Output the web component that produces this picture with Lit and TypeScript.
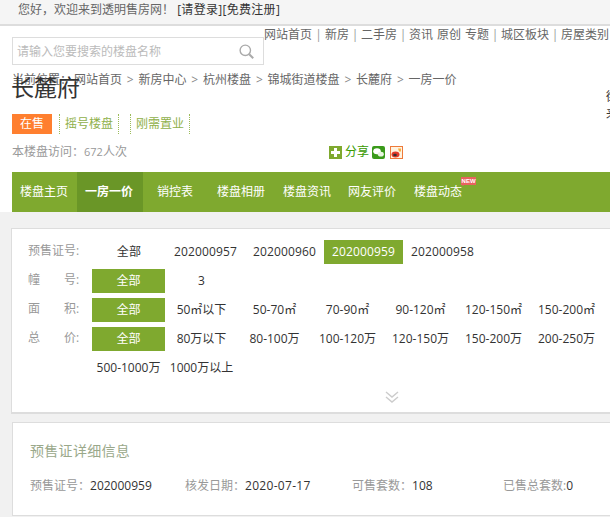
import { LitElement, html, css } from "lit";
import { customElement } from "lit/decorators.js";

const tabs = ["楼盘主页", "一房一价", "销控表", "楼盘相册", "楼盘资讯", "网友评价", "楼盘动态"];
const crumbs = ["网站首页", "新房中心", "杭州楼盘", "锦城街道楼盘", "长麓府", "一房一价"];
const rows = [
  { label: "预售证号:", items: ["全部", "202000957", "202000960", "202000959", "202000958"], on: "202000959" },
  { label: "幢　　号:", items: ["全部", "3"], on: "全部" },
  { label: "面　　积:", items: ["全部", "50㎡以下", "50-70㎡", "70-90㎡", "90-120㎡", "120-150㎡", "150-200㎡", "200-250㎡"], on: "全部" },
  { label: "总　　价:", items: ["全部", "80万以下", "80-100万", "100-120万", "120-150万", "150-200万", "200-250万", "250-300万", "300-500万", "500-1000万", "1000万以上"], on: "全部" },
];

@customElement("app-root")
export class AppRoot extends LitElement {
  static styles = css`
    :host {
      display: block;
      width: 610px;
      height: 517px;
      overflow: hidden;
      background: #f1f1f1;
      font: 12px/24px "Open Sans", "Noto Sans CJK SC", sans-serif;
      color: #333;
    }
    .top {
      height: 24px;
      background: #f5f5f5;
      border-bottom: 2px solid #ddd;
      padding-left: 18px;
      color: #666;
      line-height: 19px;
      white-space: nowrap;
    }
    .top b { font-weight: 400; color: #333; letter-spacing: 0.3px; }
    .head {
      background: #fff;
      height: 186px;
      padding-left: 12px;
      position: relative;
      overflow: hidden;
    }
    .headrow { display: flex; height: 39px; }
    .search {
      margin-top: 11px;
      height: 26px;
      border: 1px solid #ddd;
      display: flex;
      align-items: center;
      justify-content: space-between;
      padding: 0 9px 0 4px;
      width: 237px;
      color: #bbb;
      flex: none;
    }
    .search span { padding-top: 1px; }
    .links {
      display: flex;
      height: 16px;
      line-height: 16px;
      margin-top: 1px;
      color: #666;
      white-space: nowrap;
      flex: none;
    }
    .links i { font-style: normal; color: #999; width: 12px; text-align: center; }
    .links i:first-of-type { width: 13px; }
    .links span + span { margin-left: 4px; }
    .crumb {
      display: flex;
      color: #666;
      line-height: 16px;
      margin-top: 7px;
      white-space: nowrap;
      height: 16px;
    }
    .crumb i { font-style: normal; width: 16.5px; text-align: center; color: #888; }
    .crumb b { font-weight: 400; margin-right: 2px; }
    .title {
      margin: -15px 0 0 -1px;
      font-size: 23px;
      line-height: 28px;
      color: #333;
      font-weight: 400;
    }
    .tags { display: flex; margin-top: 13px; height: 20px; line-height: 20px; }
    .state { width: 40px; background: #ff7f2f; color: #fff; text-align: center; margin-right: 7px; }
    .tag {
      width: 58px;
      text-align: center;
      color: #8fb04a;
      border-left: 1px dotted #9bbb59;
      border-right: 1px dotted #9bbb59;
      margin-right: 11px;
    }
    .visit { display: flex; margin-top: 8px; height: 20px; line-height: 20px; color: #999; }
    .visit > span:first-child { width: 317px; }
    .visit em { font-style: normal; font-size: 11px; }
    .share { display: flex; align-items: center; color: #3a9a00; }
    .share svg { display: block; }
    .share .t { margin: 0 3px 0 3px; }
    .share .w { margin-right: 5px; }
    .side {
      position: absolute;
      left: 606px;
      top: 62px;
      line-height: 17px;
      width: 14px;
      color: #333;
    }
    .nav {
      display: flex;
      height: 40px;
      line-height: 40px;
      background: #7fa92f;
      color: #fff;
      position: absolute;
      left: 12px;
      right: 0;
      top: 146px;
    }
    .nav a { padding: 0 9px; position: relative; white-space: nowrap; }
    .nav a:first-child { padding: 0 9px 0 8px; }
    .nav a.on { background: #6a9627; font-weight: 700; padding: 0 10px 0 8px; }
    .nav a.w { padding: 0 15px 0 14px; }
    .nav a.n { padding: 0 9px 0 8px; }
    .new {
      position: absolute;
      left: 56px;
      top: 5px;
      width: 15px;
      height: 8px;
      background: #e8635f;
      color: #fff;
      font: 700 6px/8px "Liberation Sans", sans-serif;
      text-align: center;
    }
    .new::after {
      content: "";
      position: absolute;
      left: 1px;
      top: 8px;
      border: 1.5px solid transparent;
      border-top-color: #e8635f;
    }
    .panel {
      margin: 16px 0 0 11px;
      width: 760px;
      height: 172px;
      background: #fff;
      border: 1px solid #ddd;
      border-width: 1px 0 2px 1px;
      padding: 11px 0 0 16px;
      position: relative;
    }
    .row { display: flex; align-items: flex-start; }
    .row + .row { margin-top: 5px; }
    .label { width: 64px; color: #999; flex: none; line-height: 21px; white-space: pre; }
    .items { display: flex; flex-wrap: wrap; width: 657px; row-gap: 5px; }
    .item { width: 73px; height: 24px; line-height: 24px; text-align: center; white-space: nowrap; }
    .cert .item { width: 79px; letter-spacing: 0.13px; }
    .cert .item:first-child { width: 74px; }
    .item.on { background: #7fa92f; color: #fff; }
    .more { position: absolute; left: 373px; top: 162px; display: block; }
    .panel2 {
      margin: 8px 0 0 12px;
      width: 640px;
      height: 92px;
      background: #fff;
      border: 1px solid #ddd;
      border-width: 1px 0 1px 1px;
      padding-left: 17px;
      overflow: hidden;
    }
    .h {
      margin-top: 16px;
      font-size: 14px;
      line-height: 24px;
      letter-spacing: 0.3px;
      color: #9aa88a;
    }
    .facts { display: flex; margin-top: 11px; white-space: nowrap; }
    .facts span { color: #999; }
    .facts > div { flex: none; }
    .facts em { font-style: normal; letter-spacing: 0.3px; }
    .f1 { width: 155px; }
    .f2 { width: 167px; }
    .f3 { width: 151px; }
  `;

  render() {
    return html`
      <div class="top">您好，欢迎来到透明售房网！ <b>[请登录][免费注册]</b></div>
      <div class="head">
        <div class="headrow">
          <div class="search">
            <span>请输入您要搜索的楼盘名称</span>
            <svg width="15" height="15" viewBox="0 0 15 15" fill="none" stroke="#aaa" stroke-width="1.4"><circle cx="6.3" cy="6.3" r="5.2"/><path d="M10.2 10.2l4 4" stroke-width="2"/></svg>
          </div>
          <div class="links">
            <span>网站首页</span><i>|</i><span>新房</span><i>|</i><span>二手房</span><i>|</i><span>资讯</span><span>原创</span><span>专题</span><i>|</i><span>城区板块</span><i>|</i><span>房屋类别</span>
          </div>
        </div>
        <div class="crumb"><b>当前位置：</b>${crumbs.map((c, i) => html`${i ? html`<i>&gt;</i>` : ""}<span>${c}</span>`)}</div>
        <div class="title">长麓府</div>
        <div class="tags"><div class="state">在售</div><div class="tag">摇号楼盘</div><div class="tag">刚需置业</div></div>
        <div class="visit">
          <span>本楼盘访问：<em>672</em>人次</span>
          <div class="share">
            <svg width="13" height="13" viewBox="0 0 13 13"><rect width="13" height="13" fill="#7fa92f"/><path d="M5 2h3v3h3v3H8v3H5V8H2V5h3z" fill="#fff"/></svg>
            <span class="t">分享</span>
            <svg class="w" width="13" height="13" viewBox="0 0 13 13"><rect width="13" height="13" rx="2" fill="#3a9a1a"/><ellipse cx="5" cy="5.3" rx="3.8" ry="3" fill="#fff"/><ellipse cx="8.8" cy="8.2" rx="3" ry="2.4" fill="#e8f5e0"/></svg>
            <svg width="13" height="13" viewBox="0 0 13 13"><rect x=".5" y=".5" width="12" height="12" fill="#fff3e0" stroke="#ee7a3a"/><ellipse cx="5.5" cy="8.5" rx="4" ry="3" fill="#e03a2a"/><ellipse cx="5" cy="9" rx="1.8" ry="1.3" fill="#333"/><path d="M8 2.5h3v3H9z" fill="#f5b041"/></svg>
          </div>
        </div>
        <div class="side">街<br />来</div>
        <nav class="nav">
          ${tabs.map((t, i) => html`<a class=${i === 1 ? "on" : i === 2 ? "w" : i === 5 ? "n" : ""}>${t}${i === 6 ? html`<span class="new">NEW</span>` : ""}</a>`)}
        </nav>
      </div>
      <section class="panel">
        ${rows.map((r, i) => html`
          <div class="row ${i === 0 ? "cert" : ""}">
            <div class="label">${r.label}</div>
            <div class="items">
              ${r.items.map((t) => html`<div class="item ${t === r.on ? "on" : ""}">${t}</div>`)}
            </div>
          </div>`)}
        <svg class="more" width="14" height="13" viewBox="0 0 14 13" fill="none" stroke="#ccc" stroke-width="1.4"><path d="M1 1l6 5 6-5M1 6l6 5 6-5"/></svg>
      </section>
      <section class="panel2">
        <div class="h">预售证详细信息</div>
        <div class="facts">
          <div class="f1"><span>预售证号：</span>202000959</div>
          <div class="f2"><span>核发日期：</span><em>2020-07-17</em></div>
          <div class="f3"><span>可售套数：</span>108</div>
          <div><span>已售总套数:</span>0</div>
        </div>
      </section>
    `;
  }
}
